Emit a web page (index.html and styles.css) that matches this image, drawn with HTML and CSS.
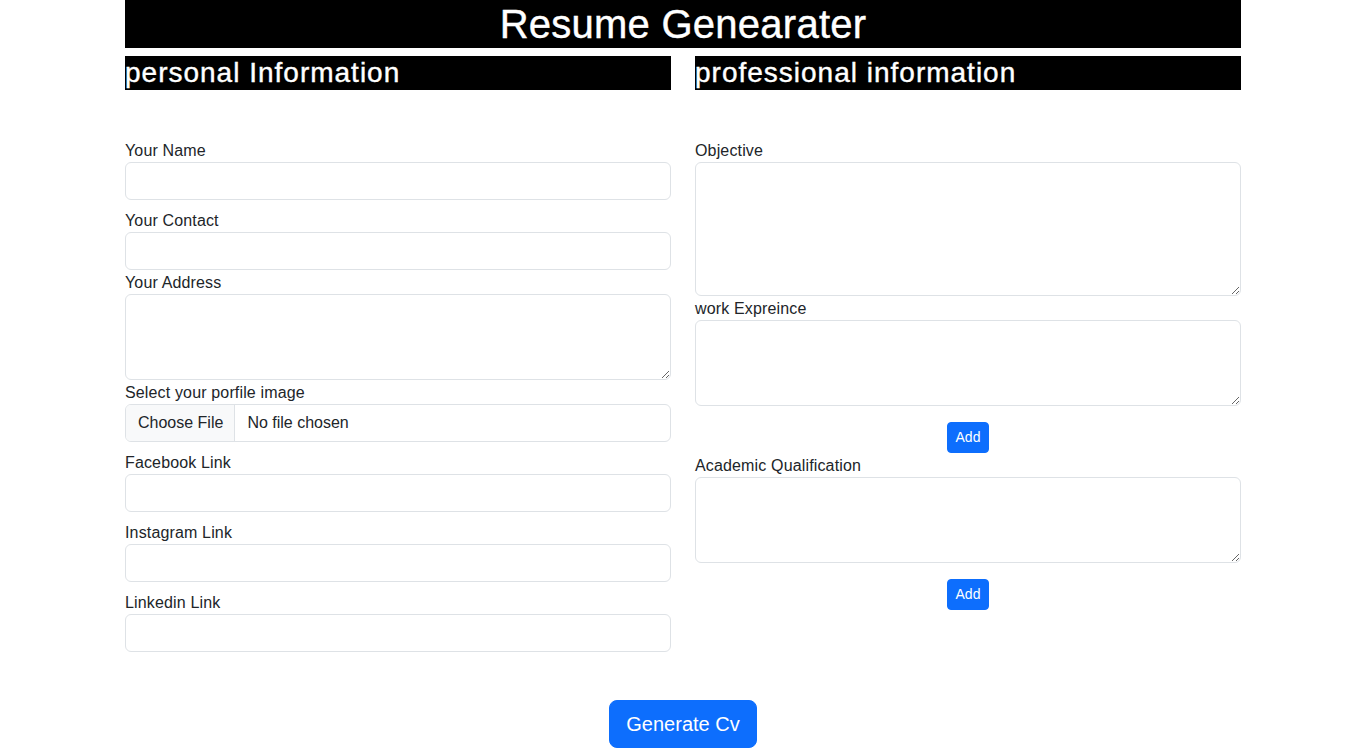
FILE: index.html
```html
<!DOCTYPE html>
<html lang="en">
<head>
<meta charset="utf-8">
<title>Resume Genearater</title>
<link rel="stylesheet" href="styles.css">
</head>
<body>
<div class="container">
  <h1 class="page-title">Resume Genearater</h1>
  <div class="row">
    <div class="col">
      <h3 class="section-title">personal Information</h3>
      <div class="fields">
        <label class="field-label">Your Name</label>
        <input class="form-control mb-2" type="text">
        <label class="field-label">Your Contact</label>
        <input class="form-control" type="text">
        <label class="field-label">Your Address</label>
        <textarea class="form-control ta-3"></textarea>
        <label class="field-label">Select your porfile image</label>
        <div class="file-input mb-2">
          <span class="file-btn">Choose File</span>
          <span class="file-name">No file chosen</span>
        </div>
        <label class="field-label">Facebook Link</label>
        <input class="form-control mb-2" type="text">
        <label class="field-label">Instagram Link</label>
        <input class="form-control mb-2" type="text">
        <label class="field-label">Linkedin Link</label>
        <input class="form-control" type="text">
      </div>
    </div>
    <div class="col">
      <h3 class="section-title">professional information</h3>
      <div class="fields">
        <label class="field-label">Objective</label>
        <textarea class="form-control ta-5"></textarea>
        <label class="field-label">work Expreince</label>
        <textarea class="form-control ta-3"></textarea>
        <div class="add-wrap">
          <button class="btn btn-sm" type="button">Add</button>
        </div>
        <label class="field-label">Academic Qualification</label>
        <textarea class="form-control ta-3"></textarea>
        <div class="add-wrap">
          <button class="btn btn-sm" type="button">Add</button>
        </div>
      </div>
    </div>
  </div>
  <div class="generate-wrap">
    <button class="btn btn-lg" type="button">Generate Cv</button>
  </div>
</div>
</body>
</html>
```

FILE: styles.css
```css
* {
  box-sizing: border-box;
}

html, body {
  margin: 0;
  padding: 0;
}

body {
  font-family: "Liberation Sans", Arial, sans-serif;
  font-size: 16px;
  line-height: 1.5;
  color: #212529;
  background: #ffffff;
}

.container {
  max-width: 1140px;
  margin: 0 auto;
  padding: 0 12px;
}

.page-title {
  margin: 0 0 8px;
  background: #000000;
  color: #ffffff;
  text-align: center;
  font-size: 40px;
  line-height: 48px;
  font-weight: 500;
  letter-spacing: 0.25px;
  -webkit-text-stroke: 0.4px #ffffff;
}

.row {
  display: grid;
  grid-template-columns: 1fr 1fr;
  column-gap: 24px;
}

.section-title {
  margin: 0 0 8px;
  background: #000000;
  color: #ffffff;
  font-size: 28px;
  line-height: 33.6px;
  font-weight: 500;
  letter-spacing: 1px;
  -webkit-text-stroke: 0.4px #ffffff;
}

.fields {
  display: flex;
  flex-direction: column;
  padding-top: 40px;
}

.field-label {
  display: block;
  font-size: 16px;
  line-height: 24px;
  letter-spacing: 0.15px;
  padding-top: 1px;
  margin-bottom: -1px;
}

.form-control {
  display: block;
  width: 100%;
  height: 38px;
  padding: 6px 12px;
  font-family: inherit;
  font-size: 16px;
  line-height: 24px;
  color: #212529;
  background: #ffffff;
  border: 1px solid #dee2e6;
  border-radius: 6px;
  outline: none;
}

textarea.form-control {
  resize: vertical;
}

.ta-3 {
  height: 86px;
}

.ta-5 {
  height: 134px;
}

.mb-2 {
  margin-bottom: 8px;
}

.file-input {
  display: flex;
  height: 38px;
  border: 1px solid #dee2e6;
  border-radius: 6px;
  overflow: hidden;
  line-height: 24px;
}

.file-btn {
  padding: 6px 11px 6px 12px;
  background: #f8f9fa;
  border-right: 1px solid #dee2e6;
}

.file-name {
  padding: 6px 12px;
}

.add-wrap {
  display: flex;
  justify-content: center;
  margin-top: 16px;
}

.btn {
  font-family: inherit;
  color: #ffffff;
  background: #0d6efd;
  border: 1px solid #0d6efd;
  cursor: pointer;
}

.btn-sm {
  padding: 4px 8px;
  font-size: 14px;
  line-height: 21px;
  border-radius: 4px;
}

.btn-lg {
  padding: 8px 16px;
  font-size: 20px;
  line-height: 30px;
  border-radius: 8px;
}

.generate-wrap {
  display: flex;
  justify-content: center;
  margin-top: 48px;
}
```
